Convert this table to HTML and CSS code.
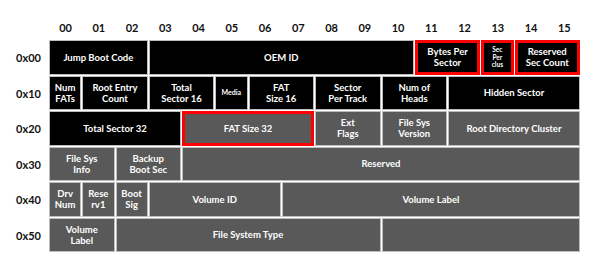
FILE: index.html
```html
<!DOCTYPE html>
<html>
<head>
<meta charset="utf-8">
<link rel="stylesheet" href="styles.css">
</head>
<body>
<div class="layout">
  <div class="corner"></div>
  <div class="colhead">00</div><div class="colhead">01</div><div class="colhead">02</div><div class="colhead">03</div>
  <div class="colhead">04</div><div class="colhead">05</div><div class="colhead">06</div><div class="colhead">07</div>
  <div class="colhead">08</div><div class="colhead">09</div><div class="colhead">10</div><div class="colhead">11</div>
  <div class="colhead">12</div><div class="colhead">13</div><div class="colhead">14</div><div class="colhead">15</div>

  <div class="rowhead">0x00</div>
  <div class="cell dark s3">Jump Boot Code</div>
  <div class="cell dark s8">OEM ID</div>
  <div class="cell dark s2 hl">Bytes Per<br>Sector</div>
  <div class="cell dark s1 hl tiny">Sec<br>Per<br>clus</div>
  <div class="cell dark s2 hl">Reserved<br>Sec Count</div>

  <div class="rowhead">0x10</div>
  <div class="cell dark s1">Num<br>FATs</div>
  <div class="cell dark s2">Root Entry<br>Count</div>
  <div class="cell dark s2">Total<br>Sector 16</div>
  <div class="cell dark s1 small">Media</div>
  <div class="cell dark s2">FAT<br>Size 16</div>
  <div class="cell dark s2">Sector<br>Per Track</div>
  <div class="cell dark s2">Num of<br>Heads</div>
  <div class="cell dark s4">Hidden Sector</div>

  <div class="rowhead">0x20</div>
  <div class="cell dark s4">Total Sector 32</div>
  <div class="cell grey s4 hl">FAT Size 32</div>
  <div class="cell grey s2">Ext<br>Flags</div>
  <div class="cell grey s2">File Sys<br>Version</div>
  <div class="cell grey s4">Root Directory Cluster</div>

  <div class="rowhead">0x30</div>
  <div class="cell grey s2">File Sys<br>Info</div>
  <div class="cell grey s2">Backup<br>Boot Sec</div>
  <div class="cell grey s12">Reserved</div>

  <div class="rowhead">0x40</div>
  <div class="cell grey s1">Drv<br>Num</div>
  <div class="cell grey s1">Rese<br>rv1</div>
  <div class="cell grey s1">Boot<br>Sig</div>
  <div class="cell grey s4">Volume ID</div>
  <div class="cell grey s9">Volume Label</div>

  <div class="rowhead">0x50</div>
  <div class="cell grey s2">Volume<br>Label</div>
  <div class="cell grey s8">File System Type</div>
  <div class="cell grey s6"></div>
</div>
</body>
</html>
```

FILE: styles.css
```css
html, body {
  margin: 0;
  padding: 0;
  background: #fff;
}
body {
  font-family: Lato, "Open Sans", "Liberation Sans", sans-serif;
  width: 600px;
  height: 272px;
  overflow: hidden;
}
.layout {
  display: grid;
  grid-template-columns: 49px repeat(16, 33.25px);
  grid-template-rows: 40px repeat(6, 35.5px);
}
.colhead {
  display: flex;
  align-items: flex-end;
  justify-content: center;
  padding-bottom: 6px;
  font-size: 11px;
  font-weight: 700;
  color: #111;
}
.rowhead {
  display: flex;
  align-items: center;
  justify-content: flex-end;
  padding-right: 8px;
  font-size: 11px;
  font-weight: 700;
  color: #111;
}
.cell {
  display: flex;
  align-items: center;
  justify-content: center;
  text-align: center;
  color: #fff;
  font-size: 9.5px;
  font-weight: 700;
  line-height: 11px;
  border: 1px solid #fff;
  border-top-width: 0;
  border-left-width: 0;
  box-shadow: inset 0 0 0 1px #bdbdbd;
  min-width: 0;
}
.dark { background: #000; }
.grey { background: #595959; }
.hl { box-shadow: inset 0 0 0 3px #f00; }
.small { font-size: 7px; }
.tiny { font-size: 6.5px; line-height: 7.5px; }
.s1 { grid-column: span 1; }
.s2 { grid-column: span 2; }
.s3 { grid-column: span 3; }
.s4 { grid-column: span 4; }
.s6 { grid-column: span 6; }
.s8 { grid-column: span 8; }
.s9 { grid-column: span 9; }
.s12 { grid-column: span 12; }
```
